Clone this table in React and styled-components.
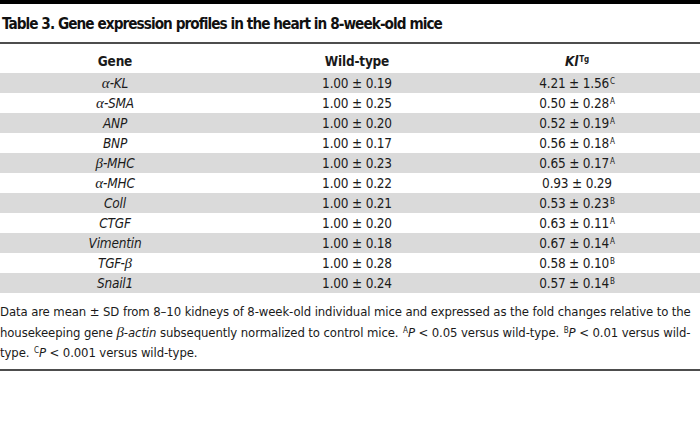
import React from "react";
import styled, { createGlobalStyle } from "styled-components";

const Global = createGlobalStyle`
  html, body { margin: 0; padding: 0; background: #fff; }
  body { font-family: "DejaVu Sans Condensed", "Roboto", sans-serif; color: #1a1a1a; }
`;

const Page = styled.div`
  width: 700px;
  display: flex;
  flex-direction: column;
`;

const TopBar = styled.div`
  height: 4px;
  background: #000;
`;

const Title = styled.h1`
  margin: 0;
  height: 40px;
  box-sizing: border-box;
  padding: 2px 0 0 2px;
  display: flex;
  align-items: center;
  font-size: 15.2px;
  letter-spacing: -0.95px;
  font-weight: 700;
  color: #111;
  border-bottom: 2px solid #4d4d4d;
  white-space: nowrap;
`;

const Table = styled.div`
  display: grid;
  grid-template-columns: 230px 254px 186px 30px;
`;

const Row = styled.div`
  display: contents;
`;

const Cell = styled.div`
  height: ${(p) => (p.$head ? "29px" : "20px")};
  display: flex;
  align-items: ${(p) => (p.$head ? "flex-end" : "center")};
  justify-content: center;
  padding-bottom: ${(p) => (p.$head ? "4px" : "0")};
  box-sizing: border-box;
  font-size: 13.5px;
  letter-spacing: -0.2px;
  font-weight: ${(p) => (p.$head ? 700 : 400)};
  font-style: ${(p) => (p.$italic ? "italic" : "normal")};
  background: ${(p) => (p.$shade ? "#dadada" : "transparent")};
  white-space: nowrap;
`;

const Greek = styled.span`
  font-family: "Liberation Serif", serif;
  font-style: italic;
  font-size: 15px;
  letter-spacing: 0;
`;

const Sup = styled.sup`
  font-size: 8px;
  line-height: 0;
  vertical-align: 0;
  position: relative;
  top: -4px;
  margin-left: 1px;
  font-style: normal;
`;

const Note = styled.div`
  padding: 9px 0 6px 0;
  font-size: 13px;
  line-height: 20px;
  letter-spacing: -0.1px;
  color: #1a1a1a;
  border-bottom: 2px solid #4d4d4d;
`;

const NoteLine = styled.div`
  white-space: nowrap;
`;

const It = styled.i`
  font-style: italic;
`;

const rows = [
  [<><Greek>α</Greek>-KL</>, "1.00 ± 0.19", "4.21 ± 1.56", "C"],
  [<><Greek>α</Greek>-SMA</>, "1.00 ± 0.25", "0.50 ± 0.28", "A"],
  ["ANP", "1.00 ± 0.20", "0.52 ± 0.19", "A"],
  ["BNP", "1.00 ± 0.17", "0.56 ± 0.18", "A"],
  [<><Greek>β</Greek>-MHC</>, "1.00 ± 0.23", "0.65 ± 0.17", "A"],
  [<><Greek>α</Greek>-MHC</>, "1.00 ± 0.22", "0.93 ± 0.29", ""],
  ["Coll", "1.00 ± 0.21", "0.53 ± 0.23", "B"],
  ["CTGF", "1.00 ± 0.20", "0.63 ± 0.11", "A"],
  ["Vimentin", "1.00 ± 0.18", "0.67 ± 0.14", "A"],
  [<>TGF-<Greek>β</Greek></>, "1.00 ± 0.28", "0.58 ± 0.10", "B"],
  ["Snail1", "1.00 ± 0.24", "0.57 ± 0.14", "B"],
];

export default function App() {
  return (
    <Page>
      <Global />
      <TopBar />
      <Title>Table 3. Gene expression profiles in the heart in 8-week-old mice</Title>
      <Table>
        <Row>
          <Cell $head>Gene</Cell>
          <Cell $head>Wild-type</Cell>
          <Cell $head $italic>
            <span>Kl<Sup>Tg</Sup></span>
          </Cell>
          <Cell $head />
        </Row>
        {rows.map(([gene, wt, kl, sig], i) => (
          <Row key={i}>
            <Cell $italic $shade={i % 2 === 0}>
              <span>{gene}</span>
            </Cell>
            <Cell $shade={i % 2 === 0}>{wt}</Cell>
            <Cell $shade={i % 2 === 0}>
              <span>
                {kl}
                {sig && <Sup>{sig}</Sup>}
              </span>
            </Cell>
            <Cell $shade={i % 2 === 0} />
          </Row>
        ))}
      </Table>
      <Note>
        <NoteLine>
          Data are mean ± SD from 8–10 kidneys of 8-week-old individual mice and expressed as the fold changes relative to the
        </NoteLine>
        <NoteLine>
          housekeeping gene <Greek>β</Greek><It>-actin</It> subsequently normalized to control mice. <Sup>A</Sup><It>P</It> &lt; 0.05 versus wild-type. <Sup>B</Sup><It>P</It> &lt; 0.01 versus wild-
        </NoteLine>
        <NoteLine>
          type. <Sup>C</Sup><It>P</It> &lt; 0.001 versus wild-type.
        </NoteLine>
      </Note>
    </Page>
  );
}
